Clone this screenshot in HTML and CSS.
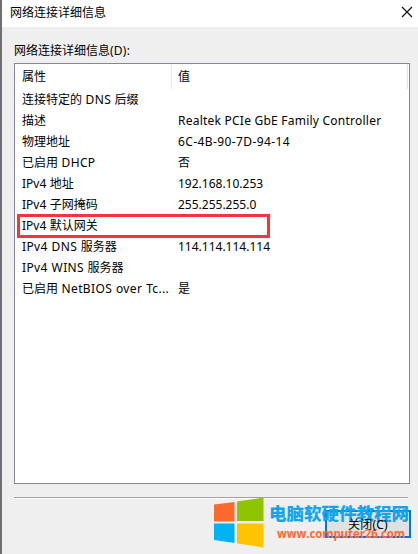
FILE: index.html
```html
<!DOCTYPE html>
<html lang="zh-CN">
<head>
    <meta charset="UTF-8">
    <title>网络连接详细信息</title>
    <link rel="stylesheet" href="styles.css">
</head>
<body>
    <div class="dialog">
        <div class="title-bar">
            <span>网络连接详细信息</span>
            <svg class="close-icon" width="12" height="12" viewBox="0 0 12 12">
                <path d="M1 1L11 11M11 1L1 11" stroke="#111" stroke-width="1.2" fill="none"/>
            </svg>
        </div>

        <div class="content">
            <div class="list-label">网络连接详细信息<span class="en">(D):</span></div>
            <div class="list">
                <div class="list-header">
                    <div class="name">属性</div>
                    <div class="value">值</div>
                </div>
                <div class="row"><div class="name">连接特定的 <span class="en">DNS</span> 后缀</div><div class="value"></div></div>
                <div class="row"><div class="name">描述</div><div class="value"><span class="en">Realtek PCIe GbE Family Controller</span></div></div>
                <div class="row"><div class="name">物理地址</div><div class="value"><span class="mac">6C-4B-90-7D-94-14</span></div></div>
                <div class="row"><div class="name">已启用 <span class="en">DHCP</span></div><div class="value">否</div></div>
                <div class="row"><div class="name">IPv4 地址</div><div class="value">192.168.10.253</div></div>
                <div class="row"><div class="name">IPv4 子网掩码</div><div class="value">255.255.255.0</div></div>
                <div class="row marked"><div class="name">IPv4 默认网关</div><div class="value"></div></div>
                <div class="row"><div class="name"><span class="en">IPv4 DNS</span> 服务器</div><div class="value">114.114.114.114</div></div>
                <div class="row"><div class="name"><span class="en">IPv4 WINS</span> 服务器</div><div class="value"></div></div>
                <div class="row"><div class="name">已启用 <span class="en">NetBIOS over Tc...</span></div><div class="value">是</div></div>
            </div>

            <div class="footer">
                <button class="close-button"><span>关闭(C)</span></button>
            </div>
        </div>
    </div>

    <div class="watermark">
        <svg width="50" height="52" viewBox="0 0 50 52">
            <path d="M0 7.5L20.5 5V24.500H0Z" fill="#fb6a2d"/>
            <path d="M23 4.500L49.500 0.500V24H23Z" fill="#8fc400"/>
            <path d="M0 26.500H20.500V46L0 43Z" fill="#00b2f1"/>
            <path d="M23 26.500H49.500V50.500L23 46.500Z" fill="#ffc400"/>
        </svg>
        <div class="watermark-text">
            <div class="site-name">电脑软硬件教程网</div>
            <div class="site-url">www.computer26.com</div>
        </div>
    </div>
</body>
</html>
```
FILE: styles.css
```css
body {
    margin: 0;
    height: 554px;
    overflow: hidden;
    background: #efefef;
    color: #000;
    font-family: "Noto Sans", "Noto Sans CJK SC", sans-serif;
    font-size: 12px;
}

.dialog {
    display: flex;
    flex-direction: column;
    box-sizing: border-box;
    height: 554px;
    border-left: 2px solid #707070;
}

/* Title bar */
.title-bar {
    display: flex;
    justify-content: space-between;
    align-items: center;
    box-sizing: border-box;
    height: 27px;
    padding: 0 5px 4px 8px;
    background: #fff;
}

/* Details list */
.content {
    padding: 14px 8px 0 12px;
}

.list-label {
    height: 22px;
    line-height: 20px;
}

.list {
    box-sizing: border-box;
    height: 421px;
    border: 1px solid #828790;
    background: #fff;
}

.list-header,
.row {
    display: flex;
    height: 21px;
    line-height: 21px;
    white-space: nowrap;
}

.list-header {
    height: 25px;
    line-height: 25px;
    margin-right: 1px;
    border-right: 1px solid #e5e5e5;
}

.name {
    box-sizing: border-box;
    width: 157px;
    padding-left: 7px;
}

.list-header .name {
    border-right: 1px solid #e5e5e5;
}

.value {
    padding-left: 6px;
}

.row:first-of-type .name,
.row .name {
    word-spacing: 0.4px;
}

.en {
    letter-spacing: 0.23px;
}

.name .en {
    letter-spacing: 0.36px;
}

.mac {
    letter-spacing: 0.4px;
}

.marked {
    position: relative;
}

.marked::after {
    content: "";
    position: absolute;
    top: -1px;
    left: 2px;
    width: 247px;
    height: 18px;
    border: 3px solid #fb3338;
}

/* Footer */
.footer {
    display: flex;
    justify-content: flex-end;
    margin: 13px 2px 0 0;
    padding-top: 12px;
    border-top: 1px solid #a0a0a0;
    box-shadow: inset 0 1px #fff;
}

.close-button {
    width: 86px;
    height: 28px;
    margin-right: -3px;
    padding: 0;
    border: 2px solid #0078d7;
    background: #e1e1e1;
    color: #000;
    font: inherit;
}

.close-button span {
    position: relative;
    z-index: 2;
    letter-spacing: 0.2px;
}

/* Site watermark */
.watermark {
    position: absolute;
    z-index: 1;
    top: 497px;
    left: 214px;
    display: flex;
}

.watermark-text {
    margin: 5px 0 0 5px;
    font-weight: bold;
    white-space: nowrap;
}

.site-name {
    height: 23px;
    line-height: 23px;
    color: #14a4ee;
    font-size: 17.5px;
    font-weight: 900;
}

.site-url {
    margin-left: 8px;
    line-height: 18px;
    color: #fb6a35;
    font-family: "Open Sans", sans-serif;
    font-size: 11.5px;
    letter-spacing: -0.1px;
}
```
